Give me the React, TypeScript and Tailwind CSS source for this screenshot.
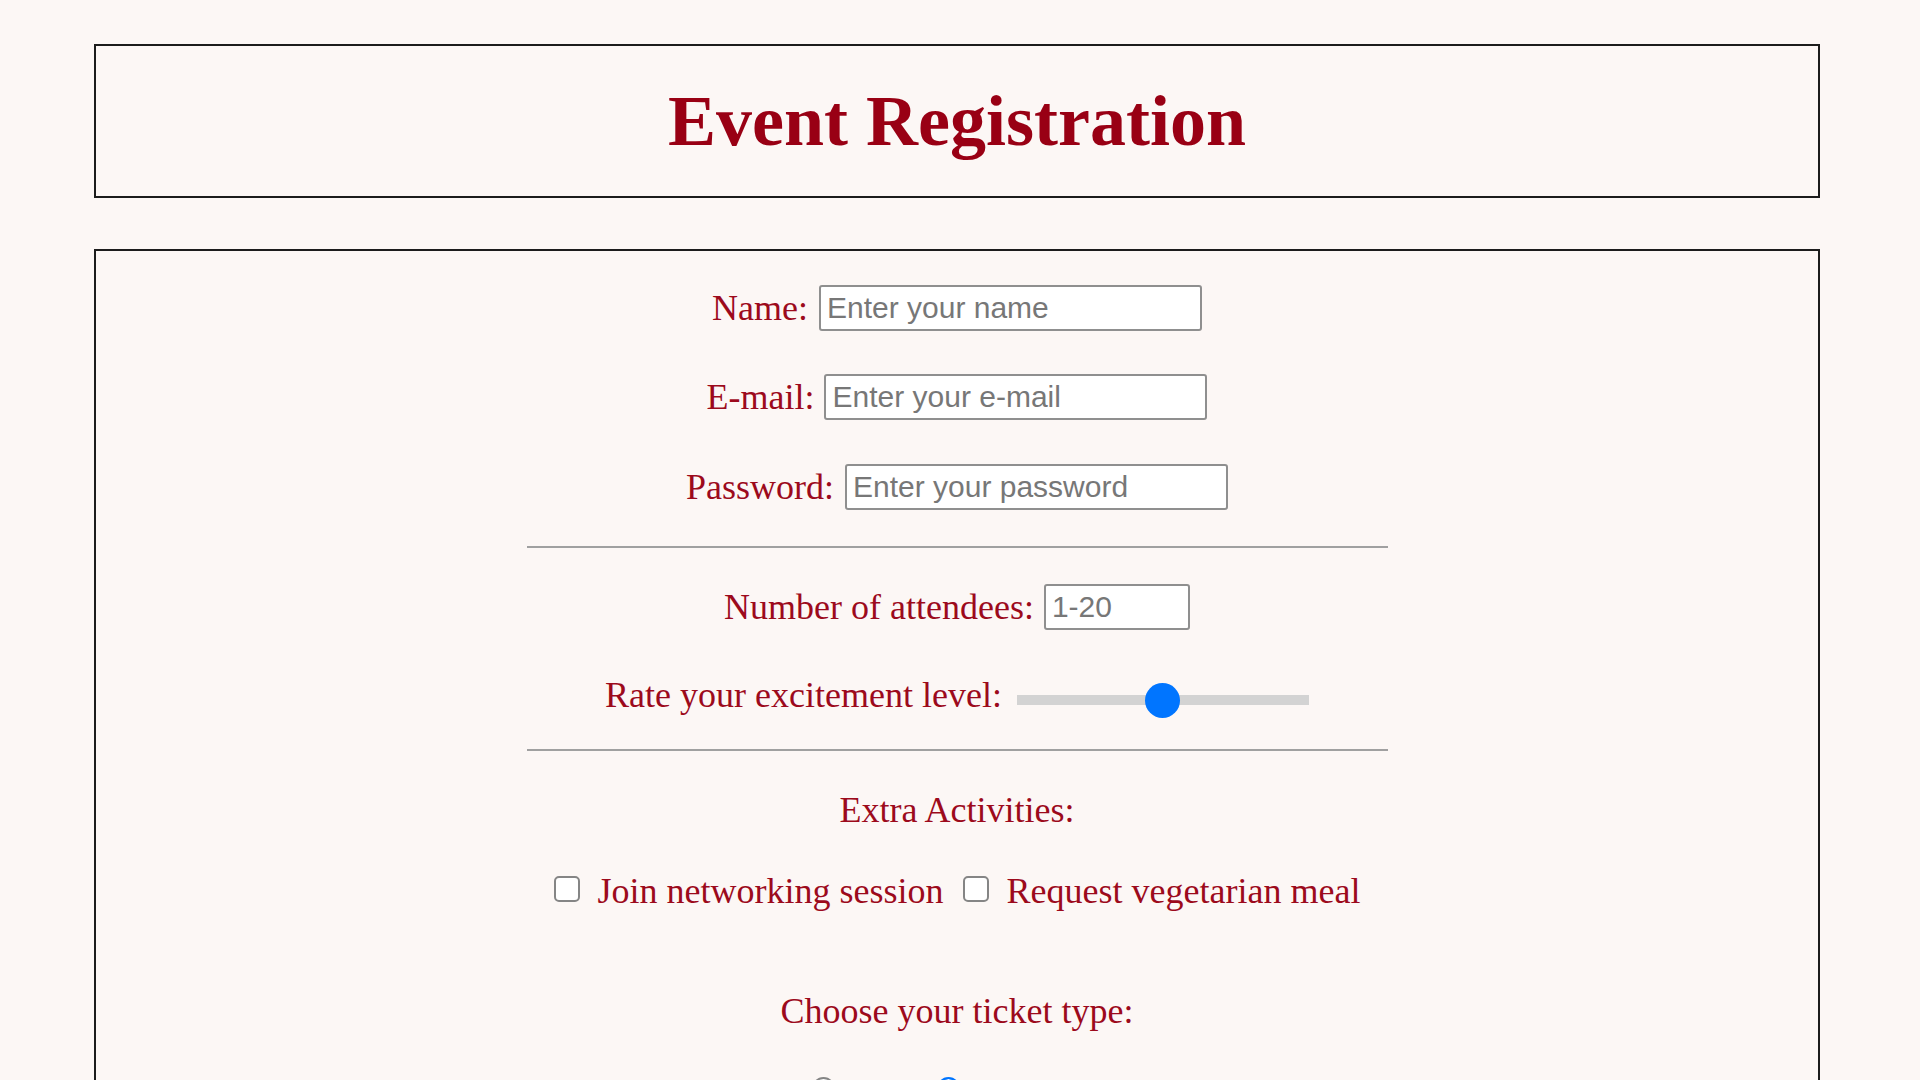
import { useState } from 'react'

const label = "text-[36px] leading-[41px] text-[#9c0a1c] [font-family:'Liberation_Serif',serif]"
const field =
  "h-[46px] rounded-[3px] border-2 border-[#8f8f8f] bg-white px-[6px] text-[30px] text-[#333] placeholder:text-[#777] outline-none [font-family:'Liberation_Sans',Arial,sans-serif]"

function Row({ children, className = '' }: { children: React.ReactNode; className?: string }) {
  return <div className={`flex h-[46px] items-center justify-center ${className}`}>{children}</div>
}

function Check({ text }: { text: string }) {
  const [on, setOn] = useState(false)
  return (
    <label className="flex items-center">
      <input
        type="checkbox"
        checked={on}
        onChange={() => setOn(!on)}
        className="m-0 h-[26px] w-[26px] -translate-y-[2px] appearance-none rounded-[5px] border-2 border-[#858585] bg-white checked:border-[#0075ff] checked:bg-[#0075ff]"
      />
      <span className={`${label} ml-[18px]`}>{text}</span>
    </label>
  )
}

export default function App() {
  const [ticket, setTicket] = useState('premium')
  const [level, setLevel] = useState(50)

  return (
    <div className="min-h-screen bg-[#fcf7f5] pt-[44px]">
      <div className="ml-[94px] flex h-[154px] w-[1726px] items-center justify-center border-2 border-[#1c1c1c]">
        <h1 className="text-[72px] font-bold leading-[83px] text-[#990014] [font-family:'Liberation_Serif',serif]">
          Event Registration
        </h1>
      </div>

      <form className="ml-[94px] mt-[51px] w-[1726px] border-2 border-[#1c1c1c] pb-[300px] pt-[34px]">
        <Row>
          <span className={label}>Name:</span>
          <input className={`${field} ml-[11px] w-[383px]`} placeholder="Enter your name" />
        </Row>
        <Row className="mt-[43px]">
          <span className={label}>E-mail:</span>
          <input type="email" className={`${field} ml-[10px] w-[383px]`} placeholder="Enter your e-mail" />
        </Row>
        <Row className="mt-[44px]">
          <span className={label}>Password:</span>
          <input type="password" className={`${field} ml-[11px] w-[383px]`} placeholder="Enter your password" />
        </Row>

        <hr className="mx-auto mt-[36px] w-1/2 border-t-2 border-[#a0a0a0]" />

        <Row className="mt-[36px]">
          <span className={label}>Number of attendees:</span>
          <input type="number" className={`${field} ml-[10px] h-[45px] w-[146px]`} placeholder="1-20" />
        </Row>
        <Row className="mt-[47px]">
          <span className={`${label} mb-[10px]`}>Rate your excitement level:</span>
          <input
            type="range"
            min={0}
            max={100}
            value={level}
            onChange={(e) => setLevel(Number(e.target.value))}
            className="ml-[15px] h-[10px] w-[292px] appearance-none bg-[#d3d3d3] outline-none [&::-webkit-slider-thumb]:h-[35px] [&::-webkit-slider-thumb]:w-[35px] [&::-webkit-slider-thumb]:appearance-none [&::-webkit-slider-thumb]:rounded-full [&::-webkit-slider-thumb]:bg-[#0075ff]"
          />
        </Row>

        <hr className="mx-auto mt-[26px] w-1/2 border-t-2 border-[#a0a0a0]" />

        <p className={`${label} mt-[39px] text-center`}>Extra Activities:</p>
        <Row className="mt-[37px] gap-[19px]">
          <Check text="Join networking session" />
          <Check text="Request vegetarian meal" />
        </Row>

        <p className={`${label} mt-[77px] text-center`}>Choose your ticket type:</p>
        <Row className="mt-[37px] gap-[12px]">
          {[
            { id: 'basic', text: 'Basic' },
            { id: 'premium', text: 'Premium' },
          ].map((t) => (
            <label key={t.id} className="flex items-center">
              <input
                type="radio"
                name="ticket"
                checked={ticket === t.id}
                onChange={() => setTicket(t.id)}
                className="m-0 h-[23px] w-[23px] -translate-y-[4px] appearance-none rounded-full border-2 border-[#858585] bg-white checked:border-[#0075ff] checked:bg-[#0075ff] checked:shadow-[inset_0_0_0_3px_white]"
              />
              <span className={`${label} ml-[10px]`}>{t.text}</span>
            </label>
          ))}
        </Row>

        <div className="mt-[60px] flex justify-center">
          <button
            type="submit"
            className="rounded-[4px] border-2 border-[#8f8f8f] bg-[#efefef] px-[20px] py-[6px] text-[30px] text-black [font-family:'Liberation_Sans',Arial,sans-serif]"
          >
            Register
          </button>
        </div>
      </form>
    </div>
  )
}
